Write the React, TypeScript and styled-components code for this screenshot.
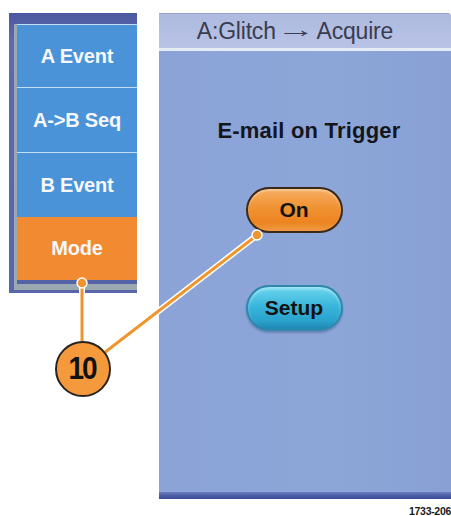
import React from "react";
import styled, { createGlobalStyle } from "styled-components";

const Global = createGlobalStyle`
  html, body { margin: 0; padding: 0; background: #ffffff; }
  body { font-family: "Liberation Sans", Arial, sans-serif; }
`;

const Page = styled.div`
  position: relative;
  width: 451px;
  height: 516px;
  overflow: hidden;
  box-sizing: border-box;
  padding: 13px 0 0 9px;
  display: flex;
  flex-direction: row;
  align-items: flex-start;
  background: #ffffff;
`;

const LeftFrame = styled.div`
  width: 128px;
  box-sizing: border-box;
  padding: 11px 0 3px 5px;
  background: linear-gradient(180deg, #4b58a0 0%, #5d6aae 10%, #5866aa 100%);
`;

const Bevel = styled.div`
  border-left: 3px solid #9ca8b0;
  border-bottom: 6px solid #9ca8b0;
  background: #5462a8;
  padding-bottom: 4px;
`;

const Stack = styled.div`
  display: flex;
  flex-direction: column;
`;

const MenuButton = styled.div<{ $active?: boolean; $h: number }>`
  height: ${(p) => p.$h}px;
  display: flex;
  align-items: center;
  justify-content: center;
  background: ${(p) => (p.$active ? "#f28a32" : "#4b93d8")};
  border-top: ${(p) => (p.$active ? "none" : "1px solid #c2def4")};
  color: #f6f8fb;
  font-weight: bold;
  font-size: 20px;
  letter-spacing: -0.2px;
`;

const RightCol = styled.div`
  margin-left: 22px;
  width: 292px;
  display: flex;
  flex-direction: column;
`;

const Screen = styled.div`
  height: 486px;
  display: flex;
  flex-direction: column;
  background: #8aa3d6;
  border-top-right-radius: 4px;
  overflow: hidden;
`;

const Header = styled.div`
  height: 35px;
  box-sizing: border-box;
  border-top: 1px solid #9aa3cd;
  background: linear-gradient(180deg, #aeb9df 0%, #b8c3e6 100%);
  display: flex;
  align-items: center;
  justify-content: center;
  padding-right: 20px;
  color: #3a3d4e;
  font-size: 23px;
  letter-spacing: -0.2px;
`;

const Arrow = styled.span`
  display: inline-block;
  font-size: 23px;
  margin: 0 10px 0 8px;
  transform: translateY(-2px) scaleX(1.7);
`;

const Divider = styled.div`
  height: 3px;
  background: #e6ecf7;
`;

const Body = styled.div`
  flex: 1;
  display: flex;
  flex-direction: column;
  align-items: center;
  background: linear-gradient(90deg, #8ba3d7 0%, #8da6d8 60%, #88a0d4 100%);
`;

const Heading = styled.div`
  margin-top: 67px;
  padding-left: 8px;
  line-height: 25px;
  font-size: 22px;
  font-weight: bold;
  letter-spacing: 0.2px;
  color: #15161c;
`;

const Pill = styled.div<{ $tone: "orange" | "teal"; $top: number }>`
  margin-top: ${(p) => p.$top}px;
  margin-right: 22px;
  width: 97px;
  height: 46px;
  box-sizing: border-box;
  border-radius: 23px;
  display: flex;
  align-items: center;
  justify-content: center;
  font-size: 21px;
  font-weight: bold;
  color: #121212;
  border: ${(p) => (p.$tone === "orange" ? "2px solid #3b2a1c" : "2px solid #2f87ab")};
  background: ${(p) =>
    p.$tone === "orange"
      ? "linear-gradient(180deg, #f6ad62 0%, #f19232 45%, #ec8420 80%, #f09a44 100%)"
      : "linear-gradient(180deg, #6ed6ee 0%, #39b6dc 45%, #2aa2cc 80%, #1f88b4 100%)"};
  box-shadow: ${(p) =>
    p.$tone === "orange"
      ? "inset 0 2px 2px rgba(255,255,255,0.35)"
      : "inset 0 2px 3px rgba(255,255,255,0.4), 0 2px 2px rgba(40,70,120,0.35)"};
`;

const BottomEdge = styled.div`
  height: 7px;
  background: linear-gradient(180deg, #6c7ec2 0%, #4e5ea6 50%, #3b4a92 100%);
`;

const Caption = styled.div`
  margin-top: 6px;
  text-align: right;
  font-size: 10.5px;
  line-height: 12px;
  font-weight: bold;
  color: #1a1a1a;
  letter-spacing: -0.3px;
`;

const Callout = styled.svg`
  position: absolute;
  left: 0;
  top: 0;
  width: 451px;
  height: 516px;
  pointer-events: none;
`;

const Badge = styled.div`
  position: absolute;
  left: 55px;
  top: 341px;
  width: 56px;
  height: 56px;
  box-sizing: border-box;
  border-radius: 50%;
  background: #f49a3c;
  border: 2px solid #2a2320;
  display: flex;
  align-items: center;
  justify-content: center;
  color: #111111;
`;

const BadgeText = styled.span`
  display: inline-block;
  font-size: 28px;
  font-weight: bold;
  letter-spacing: -2px;
  margin-right: 2px;
  transform: scaleY(1.12);
`;

const items: { label: string; h: number; active?: boolean }[] = [
  { label: "A Event", h: 62 },
  { label: "A->B Seq", h: 64 },
  { label: "B Event", h: 64 },
  { label: "Mode", h: 63, active: true },
];

export default function App() {
  return (
    <>
      <Global />
      <Page>
        <LeftFrame>
          <Bevel>
            <Stack>
              {items.map((it) => (
                <MenuButton key={it.label} $active={it.active} $h={it.h}>
                  {it.label}
                </MenuButton>
              ))}
            </Stack>
          </Bevel>
        </LeftFrame>
        <RightCol>
          <Screen>
            <Header>
              A:Glitch<Arrow>→</Arrow>Acquire
            </Header>
            <Divider />
            <Body>
              <Heading>E-mail on Trigger</Heading>
              <Pill $tone="orange" $top={44}>On</Pill>
              <Pill $tone="teal" $top={52}>Setup</Pill>
            </Body>
            <BottomEdge />
          </Screen>
          <Caption>1733-206</Caption>
        </RightCol>
        <Callout viewBox="0 0 451 516">
          <line x1="82" y1="283" x2="82" y2="342" stroke="#ffffff" strokeWidth="6" />
          <line x1="82" y1="283" x2="82" y2="342" stroke="#f0952e" strokeWidth="3" />
          <line x1="104" y1="353" x2="256" y2="236" stroke="#ffffff" strokeWidth="6" />
          <line x1="104" y1="353" x2="256" y2="236" stroke="#f0952e" strokeWidth="3" />
          <circle cx="82" cy="283" r="5" fill="#f0952e" stroke="#ffffff" strokeWidth="1.5" />
          <circle cx="257" cy="235" r="5" fill="#f0952e" stroke="#ffffff" strokeWidth="1.5" />
        </Callout>
        <Badge>
          <BadgeText>10</BadgeText>
        </Badge>
      </Page>
    </>
  );
}
